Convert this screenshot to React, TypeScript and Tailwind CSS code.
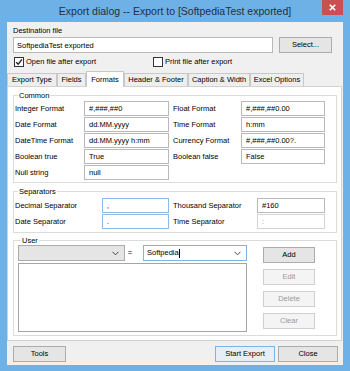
import React from 'react';

const font = { fontFamily: '"Liberation Sans", Arial, sans-serif' };

function Chevron() {
  return (
    <svg width="7" height="5" viewBox="0 0 7 5">
      <path d="M0.5 0.8L3.5 3.8L6.5 0.8" fill="none" stroke="#444" strokeWidth="1" />
    </svg>
  );
}

function Field({ value, tone = 'normal' }: { value: string; tone?: 'normal' | 'blue' | 'disabled' }) {
  const border = tone === 'blue' ? 'border-[#8dbbe8]' : tone === 'disabled' ? 'border-[#d4d4d4]' : 'border-[#b9b9b9]';
  const color = tone === 'disabled' ? 'text-[#8a8a8a]' : 'text-black';
  return (
    <input
      readOnly
      value={value}
      className={`h-[15px] w-full bg-white border ${border} ${color} pl-[4px] text-[7.5px] outline-none`}
    />
  );
}

function Btn({ label, w, disabled = false, primary = false }: { label: string; w: string; disabled?: boolean; primary?: boolean }) {
  const cls = disabled
    ? 'bg-[#f4f4f4] border-[#cfcfcf] text-[#9a9a9a]'
    : primary
      ? 'bg-[#e8eef4] border-[#7fb3e3] text-black'
      : 'bg-[#e5e5e5] border-[#acacac] text-black';
  return (
    <button type="button" className={`${w} h-[16px] border ${cls} text-[7.5px] flex items-center justify-center shrink-0`}>
      {label}
    </button>
  );
}

function Check({ checked }: { checked?: boolean }) {
  return (
    <span className="w-[10px] h-[10px] border border-[#333] bg-white flex items-center justify-center shrink-0">
      {checked && (
        <svg width="8" height="8" viewBox="0 0 8 8">
          <path d="M1.2 4.2L3.2 6.2L7 1.4" fill="none" stroke="#222" strokeWidth="1.4" />
        </svg>
      )}
    </span>
  );
}

const tabs = [
  { label: 'Export Type', w: 'w-[50px]' },
  { label: 'Fields', w: 'w-[29px]' },
  { label: 'Formats', w: 'w-[38px]', active: true },
  { label: 'Header & Footer', w: 'w-[64px]' },
  { label: 'Caption & Width', w: 'w-[62px]' },
  { label: 'Excel Options', w: 'w-[54px]' },
];

const common = [
  ['Integer Format', '#,###,##0', 'Float Format', '#,###,##0.00'],
  ['Date Format', 'dd.MM.yyyy', 'Time Format', 'h:mm'],
  ['DateTime Format', 'dd.MM.yyyy h:mm', 'Currency Format', '#,###,##0.00?.'],
  ['Boolean true', 'True', 'Boolean false', 'False'],
];

export default function App() {
  return (
    <div className="w-[350px] h-[371px] bg-[#6eb1e6] flex flex-col pb-[6px] text-black" style={font}>
      <div className="h-[22px] flex items-start shrink-0">
        <div className="flex-1 pl-[28px] text-center text-[10.5px] leading-[22px] text-[#22303e]">
          Export dialog -- Export to [SoftpediaTest exported]
        </div>
        <div className="w-[21px] h-[15px] mr-[7px] bg-[#c75050] flex items-center justify-center">
          <svg width="7" height="7" viewBox="0 0 7 7">
            <path d="M0.8 0.8L6.2 6.2M6.2 0.8L0.8 6.2" stroke="#fff" strokeWidth="1.6" />
          </svg>
        </div>
      </div>

      <div className="flex-1 mx-[7px] bg-[#f0f0f0] flex flex-col pt-[4px] text-[7.5px]">
        <div className="px-[6px]">
          <div className="h-[10px] leading-[10px]">Destination file</div>
          <div className="mt-[1px] flex gap-[6px]">
            <input
              readOnly
              value="SoftpediaTest exported"
              className="w-[260px] h-[16px] bg-white border border-[#b9b9b9] pl-[3px] text-[7.5px] outline-none"
            />
            <Btn label="Select..." w="w-[53px]" />
          </div>
          <div className="mt-[4px] h-[10px] flex items-center">
            <div className="w-[140px] pl-[1px] flex items-center gap-[2px]">
              <Check checked />
              <span>Open file after export</span>
            </div>
            <div className="flex items-center gap-[2px]">
              <Check />
              <span>Print file after export</span>
            </div>
          </div>
        </div>

        <div className="mt-[4px] h-[15px] flex items-end relative z-10">
          {tabs.map(t => (
            <div
              key={t.label}
              className={`${t.w} flex items-center justify-center border-t border-l border-r whitespace-nowrap ${
                t.active
                  ? 'h-[16px] -mb-[1px] bg-white border-[#c8c8c8]'
                  : 'h-[13px] bg-[#eeeeee] border-[#c8c8c8]'
              }`}
            >
              {t.label}
            </div>
          ))}
        </div>

        <div className="mr-[1px] h-[255px] bg-white border border-[#d2d2d2] pt-[4px] pl-[5px] pr-[4px] flex flex-col">
          <fieldset className="border border-[#dcdcdc] pt-[1px] pb-[2px] pl-[1px]">
            <legend className="ml-[3px] px-[1px] leading-[9px] h-[9px]">Common</legend>
            <div className="grid grid-cols-[69px_85px_4px_68px_84px] gap-y-[1px] items-center">
              {common.map(r => (
                <React.Fragment key={r[0]}>
                  <span>{r[0]}</span>
                  <Field value={r[1]} />
                  <span />
                  <span>{r[2]}</span>
                  <Field value={r[3]} />
                </React.Fragment>
              ))}
              <span>Null string</span>
              <Field value="null" />
            </div>
          </fieldset>

          <fieldset className="mt-[4px] border border-[#dcdcdc] pt-[2px] pb-[3px] pl-[1px]">
            <legend className="ml-[3px] px-[1px] leading-[9px] h-[9px]">Separators</legend>
            <div className="grid grid-cols-[87px_67px_4px_84px_68px] gap-y-[1px] items-center">
              <span>Decimal Separator</span>
              <Field value="," tone="blue" />
              <span />
              <span>Thousand Separator</span>
              <Field value="#160" />
              <span>Date Separator</span>
              <Field value="." tone="blue" />
              <span />
              <span>Time Separator</span>
              <Field value=":" tone="disabled" />
            </div>
          </fieldset>

          <fieldset className="mt-[3px] border border-[#dcdcdc] pb-[3px] pl-[4px]">
            <legend className="ml-[3px] px-[1px] leading-[9px] h-[9px]">User</legend>
            <div className="flex gap-[16px]">
              <div className="w-[229px] flex flex-col">
                <div className="flex items-center">
                  <div className="w-[107px] h-[16px] bg-[#e5e5e5] border border-[#acacac] flex items-center justify-end pr-[5px]">
                    <Chevron />
                  </div>
                  <div className="w-[18px] text-center -ml-[4px] mr-[4px]">=</div>
                  <div className="w-[104px] h-[16px] bg-white border border-[#7fb3e3] flex items-center justify-between pl-[3px] pr-[5px]">
                    <span className="flex items-center">
                      Softpedia<span className="w-px h-[9px] bg-black" />
                    </span>
                    <Chevron />
                  </div>
                </div>
                <div className="mt-[2px] h-[69px] bg-white border border-[#a5a5a5]" />
              </div>
              <div className="mt-[2px] flex flex-col gap-[6px]">
                <Btn label="Add" w="w-[52px]" />
                <Btn label="Edit" w="w-[52px]" disabled />
                <Btn label="Delete" w="w-[52px]" disabled />
                <Btn label="Clear" w="w-[52px]" disabled />
              </div>
            </div>
          </fieldset>
        </div>

        <div className="mt-[5px] pl-[6px] pr-[5px] flex items-center">
          <Btn label="Tools" w="w-[53px]" />
          <div className="flex-1" />
          <div className="flex gap-[3px]">
            <Btn label="Start Export" w="w-[60px]" primary />
            <Btn label="Close" w="w-[60px]" />
          </div>
        </div>
      </div>
    </div>
  );
}
